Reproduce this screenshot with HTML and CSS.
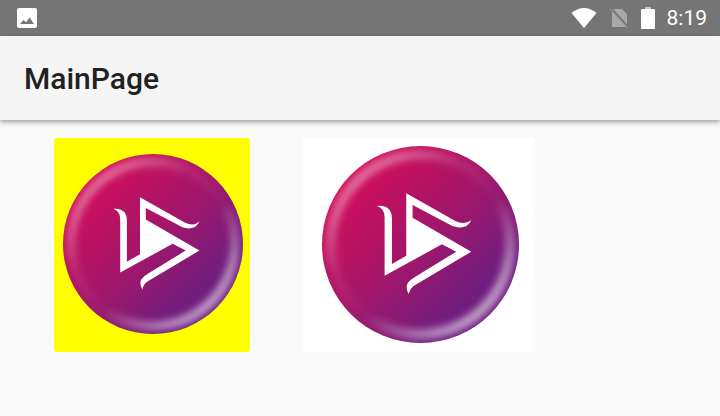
FILE: index.html
```html
<!DOCTYPE html>
<html>
<head>
<meta name="viewport" content="width=device-width, initial-scale=1">
<link rel="stylesheet" href="styles.css">
</head>
<body>

<svg class="defs" width="0" height="0">
  <defs>
    <linearGradient id="logoFill" x1="0.12" y1="0.12" x2="0.85" y2="0.85">
      <stop offset="0" stop-color="#d60d58"/>
      <stop offset="0.5" stop-color="#a3166a"/>
      <stop offset="0.88" stop-color="#701d7e"/>
      <stop offset="1" stop-color="#701d7e"/>
    </linearGradient>
    <linearGradient id="logoRim" x1="0.1" y1="0.05" x2="0.9" y2="0.95">
      <stop offset="0" stop-color="#fff" stop-opacity="0.5"/>
      <stop offset="0.34" stop-color="#fff" stop-opacity="0.08"/>
      <stop offset="0.58" stop-color="#fff" stop-opacity="0.02"/>
      <stop offset="1" stop-color="#fff" stop-opacity="0.72"/>
    </linearGradient>
    <filter id="logoBlur" x="-10%" y="-10%" width="120%" height="120%">
      <feGaussianBlur stdDeviation="4"/>
    </filter>
    <clipPath id="logoClip">
      <circle cx="100" cy="100" r="100"/>
    </clipPath>
    <symbol id="logo" viewBox="0 0 200 200">
      <circle cx="100" cy="100" r="100" fill="url(#logoFill)"/>
      <g clip-path="url(#logoClip)">
        <circle cx="100" cy="100" r="91" fill="none" stroke="url(#logoRim)" stroke-width="10" filter="url(#logoBlur)"/>
      </g>
      <path transform="translate(49 39.6) scale(.3384)" fill="#fff" d="M108 25 L255 108 Q285 122 303 105 Q293 130 262 127 Q245 125 235 117 L127 60 L127 98 L303 200 L135 300 Q118 310 116 328 Q105 310 112 295 Q120 283 135 275 L258 200 L215 178 L43 272 L43 95 Q42 70 20 63 Q45 60 58 75 Q65 85 65 100 L65 237 L108 212 Z"/>
    </symbol>
  </defs>
</svg>

<div class="statusbar">
  <svg class="photo-icon" width="20" height="20" viewBox="0 0 20 20">
    <rect width="20" height="20" rx="2" fill="#fff"/>
    <path d="M3 16 L6.500 12 L9 14.500 L12.500 9.500 L17 16 Z" fill="#757575"/>
  </svg>
  <div class="status-right">
    <svg class="wifi-icon" width="26" height="20" viewBox="0 0 26 20">
      <path d="M13 20 L0.500 5 Q13 -5 25.500 5 Z" fill="#fff"/>
    </svg>
    <svg width="19" height="20" viewBox="0 0 19 20">
      <path d="M2 1 L12 1 L17 6 L17 19 L2 19 Z" fill="#a8a8a8"/>
      <path d="M0.500 0 L18.500 20" stroke="#757575" stroke-width="2.600"/>
      <path d="M0.500 1.500 L17.500 20" stroke="#a8a8a8" stroke-width="1"/>
    </svg>
    <svg width="14" height="22" viewBox="0 0 14 22">
      <rect x="4" width="6" height="3" fill="#c8c8c8"/>
      <rect y="2" width="14" height="20" rx="1" fill="#fff"/>
    </svg>
    <span class="clock">8:19</span>
  </div>
</div>

<div class="appbar">
  <h1 class="title">MainPage</h1>
</div>

<div class="images">
  <div class="image-box yellow">
    <svg class="logo-small"><use href="#logo"/></svg>
  </div>
  <div class="image-box white">
    <svg class="logo-big"><use href="#logo"/></svg>
  </div>
</div>

</body>
</html>
```

FILE: styles.css
```css
body {
  font-family: Roboto, "Liberation Sans", sans-serif;
  margin: 0;
  height: 416px;
  overflow: hidden;
  background-color: #fafafa;
}

.defs {
  display: block;
  height: 0;
}

.statusbar {
  height: 36px;
  background-color: #757575;
  display: flex;
  align-items: center;
  justify-content: space-between;
  padding: 0 13px 0 17px;
}

.status-right {
  display: flex;
  align-items: center;
  gap: 12px;
}

.wifi-icon {
  margin-right: 1px;
}

.clock {
  color: #fff;
  font-size: 21px;
}

.appbar {
  position: relative;
  height: 84px;
  background-color: #f5f5f5;
  box-shadow: 0 2px 5px rgba(0, 0, 0, 0.38);
  display: flex;
  align-items: center;
  padding-left: 24px;
}

.title {
  margin: 0;
  font-size: 30px;
  font-weight: 500;
  color: #212121;
}

.images {
  display: flex;
  gap: 53px;
  padding: 18px 0 0 54px;
}

.image-box {
  height: 214px;
  display: flex;
  align-items: center;
  justify-content: center;
}

.yellow {
  width: 196px;
  background-color: #ffff00;
  border-radius: 3px;
}

.white {
  width: 232px;
  background-color: #fff;
}

.logo-small {
  width: 180px;
  height: 180px;
  margin: -2px 0 0 2px;
}

.logo-big {
  width: 197px;
  height: 197px;
  margin: -2px 0 0 2px;
}
```
